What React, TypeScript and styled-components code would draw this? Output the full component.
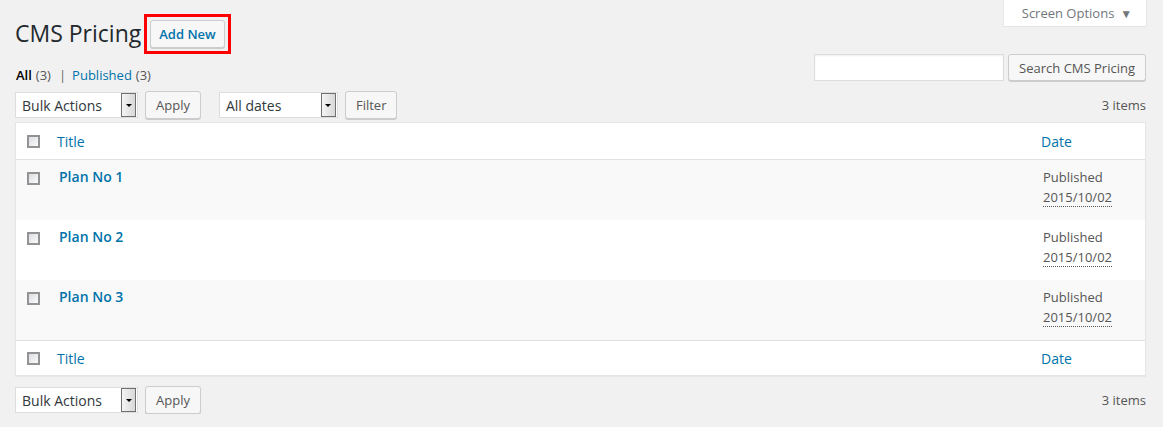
import styled, { createGlobalStyle } from 'styled-components';

const GlobalStyle = createGlobalStyle`
  html, body {
    margin: 0;
    padding: 0;
    background: #f1f1f1;
    color: #444;
    font-family: "Open Sans", "Liberation Sans", sans-serif;
    font-size: 13px;
  }
  * { box-sizing: border-box; }
`;

const Wrap = styled.div`
  padding: 0 17px 0 15px;
`;

const Top = styled.div`
  display: flex;
  justify-content: space-between;
  align-items: flex-start;
`;

const LeftHead = styled.div`
  display: flex;
  flex-direction: column;
`;

const TitleRow = styled.div`
  display: flex;
  align-items: center;
  margin-top: 14px;
  height: 40px;
`;

const Heading = styled.h1`
  margin: -2px 3px 0 0;
  font-size: 23px;
  font-weight: 400;
  line-height: 29px;
  color: #23282d;
`;

const Highlight = styled.span`
  display: inline-flex;
  border: 3px solid #f00;
  padding: 3px;
`;

const Button = styled.button<{ $primaryText?: boolean; $h?: number }>`
  height: ${(p) => p.$h ?? 28}px;
  padding: 0 ${(p) => (p.$primaryText ? 8 : 10)}px;
  border: 1px solid #ccc;
  border-radius: 3px;
  background: #f7f7f7;
  box-shadow: 0 1px 0 #ccc;
  font-family: inherit;
  font-size: 13px;
  line-height: 26px;
  color: ${(p) => (p.$primaryText ? '#0073aa' : '#555')};
  font-weight: ${(p) => (p.$primaryText ? 600 : 400)};
  cursor: pointer;
  white-space: nowrap;
`;

const Subsub = styled.ul`
  list-style: none;
  margin: 14px 0 0 1px;
  padding: 0;
  display: flex;
  font-size: 13px;
  line-height: 14px;
  color: #666;
`;

const SubItem = styled.li`
  display: flex;
  gap: 4px;
`;

const Sep = styled.span`
  margin: 0 6px 0 4px;
  color: #666;
`;

const Current = styled.span`
  color: #000;
  font-weight: 600;
`;

const SubLink = styled.a`
  color: #0073aa;
  text-decoration: none;
`;

const Count = styled.span`
  color: #555;
`;

const RightHead = styled.div`
  display: flex;
  flex-direction: column;
  align-items: flex-end;
`;

const ScreenTab = styled.div`
  height: 26px;
  width: 142px;
  background: #fff;
  box-shadow: 0 1px 1px -1px rgba(0, 0, 0, 0.1), 0 0 0 1px rgba(0, 0, 0, 0.04);
  display: flex;
  align-items: center;
  justify-content: center;
  gap: 6px;
  color: #72777c;
  font-size: 13px;
  padding-left: 4px;
`;

const Caret = styled.span`
  font-size: 12px;
  color: #72777c;
`;

const SearchBox = styled.div`
  display: flex;
  gap: 4px;
  margin-top: 28px;
`;

const SearchInput = styled.input`
  width: 190px;
  height: 27px;
  border: 1px solid #ddd;
  background: #fff;
  box-shadow: inset 0 1px 2px rgba(0, 0, 0, 0.07);
  margin: 0;
`;

const Toolbar = styled.div<{ $top: number }>`
  display: flex;
  align-items: center;
  margin-top: ${(p) => p.$top}px;
  height: 28px;
`;

const Select = styled.div<{ $w: number }>`
  width: ${(p) => p.$w}px;
  height: 26px;
  background: #fff;
  border: 1px solid #ddd;
  display: flex;
  align-items: center;
  justify-content: space-between;
  padding: 0 1px 0 6px;
  font-size: 14px;
  color: #32373c;
  margin-right: 7px;
`;

const Arrow = styled.span`
  width: 15px;
  height: 24px;
  border: 1px solid #707070;
  background: linear-gradient(to right, #f4f4f4, #d8d8d8);
  display: flex;
  align-items: center;
  justify-content: center;
  &::after {
    content: '';
    border-left: 3px solid transparent;
    border-right: 3px solid transparent;
    border-top: 3px solid #000;
  }
`;

const Spacer = styled.div<{ $w: number }>`
  width: ${(p) => p.$w}px;
`;

const Items = styled.div`
  margin-left: auto;
  color: #555;
  font-size: 13px;
`;

const Table = styled.div`
  margin-top: 3px;
  background: #fff;
  border: 1px solid #e5e5e5;
  box-shadow: 0 1px 1px rgba(0, 0, 0, 0.04);
`;

const Row = styled.div<{ $kind: 'head' | 'foot' | 'body'; $alt?: boolean }>`
  display: grid;
  grid-template-columns: 31px 1fr 114px;
  height: ${(p) => (p.$kind === 'body' ? 60 : p.$kind === 'head' ? 37 : 35)}px;
  background: ${(p) => (p.$alt ? '#f9f9f9' : '#fff')};
  border-bottom: ${(p) => (p.$kind === 'head' ? '1px solid #e1e1e1' : 'none')};
  border-top: ${(p) => (p.$kind === 'foot' ? '1px solid #e1e1e1' : 'none')};
  align-items: ${(p) => (p.$kind === 'body' ? 'start' : 'center')};
`;

const CheckCell = styled.div<{ $body?: boolean }>`
  padding-left: 11px;
  padding-top: ${(p) => (p.$body ? 12 : 0)}px;
  display: flex;
`;

const Check = styled.span`
  width: 13px;
  height: 13px;
  border: 2px solid #939393;
  background: linear-gradient(135deg, #dcdee2, #fbfbfb);
`;

const HeadLink = styled.a`
  color: #0073aa;
  font-size: 14px;
  text-decoration: none;
  padding-left: 10px;
`;

const TitleCell = styled.div`
  padding: 8px 10px 0 12px;
`;

const RowTitle = styled.a`
  color: #0073aa;
  font-size: 14px;
  font-weight: 600;
  line-height: 18px;
  text-decoration: none;
`;

const DateCell = styled.div`
  padding: 7px 0 0 12px;
  font-size: 13px;
  line-height: 20px;
  color: #555;
`;

const Abbr = styled.abbr`
  text-decoration: none;
  border-bottom: 1px dotted #555;
`;

const rows = ['Plan No 1', 'Plan No 2', 'Plan No 3'];

function BulkBar({ top, filters }: { top: number; filters?: boolean }) {
  return (
    <Toolbar $top={top}>
      <Select $w={123}>
        Bulk Actions
        <Arrow />
      </Select>
      <Button>Apply</Button>
      {filters && (
        <>
          <Spacer $w={18} />
          <Select $w={119}>
            All dates
            <Arrow />
          </Select>
          <Button>Filter</Button>
        </>
      )}
      <Items>3 items</Items>
    </Toolbar>
  );
}

export default function App() {
  return (
    <Wrap>
      <GlobalStyle />
      <Top>
        <LeftHead>
          <TitleRow>
            <Heading>CMS Pricing</Heading>
            <Highlight>
              <Button $primaryText>Add New</Button>
            </Highlight>
          </TitleRow>
          <Subsub>
            <SubItem>
              <Current>All</Current>
              <Count>(3)</Count>
              <Sep>|</Sep>
            </SubItem>
            <SubItem>
              <SubLink href="#">Published</SubLink>
              <Count>(3)</Count>
            </SubItem>
          </Subsub>
        </LeftHead>
        <RightHead>
          <ScreenTab>
            Screen Options <Caret>▼</Caret>
          </ScreenTab>
          <SearchBox>
            <SearchInput type="search" />
            <Button $h={27}>Search CMS Pricing</Button>
          </SearchBox>
        </RightHead>
      </Top>
      <BulkBar top={9} filters />
      <Table>
        <Row $kind="head">
          <CheckCell>
            <Check />
          </CheckCell>
          <HeadLink href="#">Title</HeadLink>
          <HeadLink href="#">Date</HeadLink>
        </Row>
        {rows.map((r, i) => (
          <Row key={r} $kind="body" $alt={i % 2 === 0}>
            <CheckCell $body>
              <Check />
            </CheckCell>
            <TitleCell>
              <RowTitle href="#">{r}</RowTitle>
            </TitleCell>
            <DateCell>
              Published
              <br />
              <Abbr title="2015/10/02">2015/10/02</Abbr>
            </DateCell>
          </Row>
        ))}
        <Row $kind="foot">
          <CheckCell>
            <Check />
          </CheckCell>
          <HeadLink href="#">Title</HeadLink>
          <HeadLink href="#">Date</HeadLink>
        </Row>
      </Table>
      <BulkBar top={10} />
    </Wrap>
  );
}
